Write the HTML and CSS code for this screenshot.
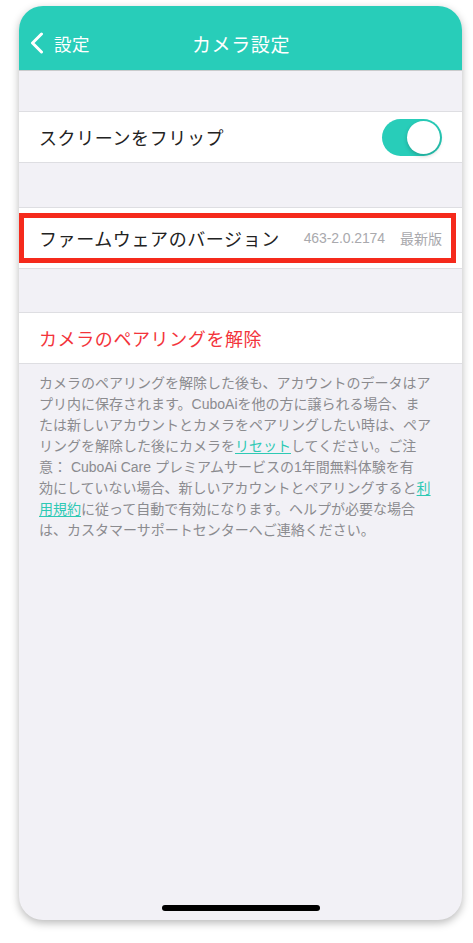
FILE: index.html
```html
<!DOCTYPE html>
<html lang="ja">
<head>
<meta charset="utf-8">
<title>カメラ設定</title>
<link rel="stylesheet" href="styles.css">
</head>
<body>
<div class="phone">
  <header class="header">
    <div class="navbar">
      <div class="back">
        <svg class="chev" width="15" height="22" viewBox="0 0 15 22"><path d="M12.5 2 L3.5 11 L12.5 20" fill="none" stroke="#fff" stroke-width="3" stroke-linecap="round" stroke-linejoin="round"/></svg>
        <span class="back-label">設定</span>
      </div>
      <div class="title">カメラ設定</div>
    </div>
  </header>

  <div class="gap g1"></div>
  <div class="row r1">
    <span class="label">スクリーンをフリップ</span>
    <span class="toggle"><span class="knob"></span></span>
  </div>
  <div class="gap g2"></div>
  <div class="row r2">
    <span class="label">ファームウェアのバージョン</span>
    <span class="meta"><span class="ver">463-2.0.2174</span><span class="latest">最新版</span></span>
    <div class="highlight"></div>
  </div>
  <div class="gap g3"></div>
  <div class="row r3">
    <span class="label danger">カメラのペアリングを解除</span>
  </div>
  <p class="note">カメラのペアリングを解除した後も、アカウントのデータはア<br>プリ内に保存されます。CuboAiを他の方に譲られる場合、ま<br>たは新しいアカウントとカメラをペアリングしたい時は、ペア<br>リングを解除した後にカメラを<a class="link">リセット</a>してください。ご注<br>意： CuboAi Care プレミアムサービスの1年間無料体験を有<br>効にしていない場合、新しいアカウントとペアリングすると<a class="link">利</a><br><a class="link">用規約</a>に従って自動で有効になります。ヘルプが必要な場合<br>は、カスタマーサポートセンターへご連絡ください。</p>
  <div class="home"></div>
</div>
</body>
</html>
```

FILE: styles.css
```css
* { box-sizing: border-box; }
html, body { margin: 0; padding: 0; background: #ffffff; }
body {
  width: 473px;
  height: 943px;
  overflow: hidden;
  font-family: "Noto Sans CJK JP", "Noto Sans", sans-serif;
}
.phone {
  position: relative;
  margin: 6px 0 0 19px;
  width: 443px;
  height: 914px;
  border-radius: 24px;
  overflow: hidden;
  background: #f2f1f6;
  box-shadow: 0 3px 8px rgba(0,0,0,0.28);
  display: flex;
  flex-direction: column;
}
.header {
  height: 65px;
  background: #28cdb9;
  border-bottom: 1px solid #c9cbcc;
  padding-top: 16px;
  flex: none;
}
.navbar {
  position: relative;
  height: 42px;
  display: flex;
  align-items: center;
  justify-content: center;
}
.back {
  position: absolute;
  left: 10px;
  top: 0;
  height: 42px;
  display: flex;
  align-items: center;
  gap: 10px;
  color: #ffffff;
}
.chev { display: block; }
.back-label { font-size: 17.5px; letter-spacing: 0.5px; }
.title {
  color: #ffffff;
  font-size: 19px;
  letter-spacing: 0.6px;
  margin-left: 1px;
}
.gap { flex: none; }
.g1 { height: 40px; }
.g2 { height: 44px; }
.g3 { height: 43px; }
.row {
  position: relative;
  flex: none;
  background: #ffffff;
  border-top: 1px solid #dedee2;
  border-bottom: 1px solid #dedee2;
  display: flex;
  align-items: center;
  justify-content: space-between;
  padding: 0 20px 0 20px;
}
.r1 { height: 52px; }
.r2 { height: 62px; }
.r3 { height: 52px; }
.label {
  font-size: 18px;
  letter-spacing: 0.6px;
  color: #222222;
}
.danger { color: #f3343b; }
.toggle {
  position: relative;
  width: 60px;
  height: 37px;
  border-radius: 19px;
  background: #28cdb9;
  flex: none;
}
.knob {
  position: absolute;
  right: 2px;
  top: 2px;
  width: 33px;
  height: 33px;
  border-radius: 50%;
  background: #ffffff;
  box-shadow: 0 2px 4px rgba(0,0,0,0.2);
}
.meta {
  display: flex;
  align-items: center;
  gap: 15px;
  color: #a9a9ad;
}
.ver {
  font-family: "Liberation Sans", "Noto Sans CJK JP", sans-serif;
  font-size: 14px;
  letter-spacing: -0.1px;
}
.latest { font-size: 14px; }
.highlight {
  position: absolute;
  left: 0;
  top: 5px;
  width: 437px;
  height: 50px;
  border: 5px solid #f52a1c;
}
.note {
  margin: 0;
  padding: 9px 0 0 20px;
  font-family: "Liberation Sans", "Noto Sans CJK JP", sans-serif;
  font-size: 14px;
  line-height: 21px;
  color: #8b8b8f;
  white-space: nowrap;
  flex: none;
}
.link {
  color: #2ec9b4;
  text-decoration: underline;
  text-underline-offset: 2px;
}
.home {
  margin-top: auto;
  margin-bottom: 9px;
  align-self: center;
  width: 158px;
  height: 6px;
  border-radius: 3px;
  background: #000000;
  margin-left: 1px;
}
```
